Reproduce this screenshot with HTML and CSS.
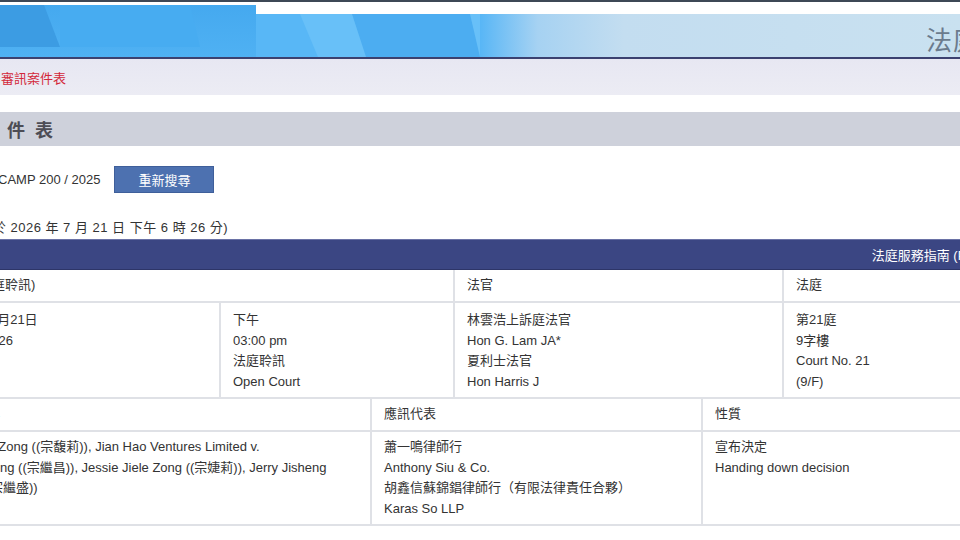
FILE: index.html
```html
<!DOCTYPE html>
<html lang="zh-Hant">
<head>
<meta charset="utf-8">
<title>審訊案件表</title>
<link rel="stylesheet" href="styles.css">
</head>
<body>
<div class="page">
  <div class="topline"></div>
  <header class="banner">
    <svg class="banner-art" width="960" height="55" viewBox="0 0 960 55" preserveAspectRatio="none" aria-hidden="true">
      <defs>
        <linearGradient id="fade" x1="0" y1="0" x2="1" y2="0">
          <stop offset="0" stop-color="#58b6f6"/>
          <stop offset="0.12" stop-color="#a6d2f2"/>
          <stop offset="0.3" stop-color="#c3ddf0"/>
          <stop offset="1" stop-color="#c9e1f0"/>
        </linearGradient>
        <linearGradient id="leftfade" x1="0" y1="0" x2="0" y2="1">
          <stop offset="0" stop-color="#45a9ef"/>
          <stop offset="1" stop-color="#4fb1f3"/>
        </linearGradient>
      </defs>
      <rect x="0" y="0" width="960" height="55" fill="#ffffff"/>
      <rect x="0" y="3" width="256" height="52" fill="url(#leftfade)"/>
      <polygon points="0,3 44,3 60,45 0,45" fill="#3c9ce3"/>
      <polygon points="60,3 190,3 200,45 60,45" fill="#47acf1"/>
      <rect x="256" y="12" width="224" height="43" fill="#68c0f8"/>
      <polygon points="256,12 300,12 318,55 256,55" fill="#58b7f6"/>
      <polygon points="352,12 470,12 480,55 366,55" fill="#4cadf1"/>
      <rect x="480" y="12" width="480" height="43" fill="url(#fade)"/>
    </svg>
    <span class="banner-title">法庭</span>
  </header>
  <div class="banner-rule"></div>
  <nav class="crumb"><span class="crumb-link">審訊案件表</span></nav>
  <h1 class="titlebar"><span class="title-text">審訊案件表</span></h1>
  <div class="search">
    <span class="case-no">CAMP 200 / 2025</span>
    <button class="btn" type="button">重新搜尋</button>
  </div>
  <p class="updated"><span class="updated-text">(資料更新於 2026 年 7 月 21 日 下午 6 時 26 分)</span></p>
  <div class="navbar"><span class="guide">法庭服務指南 (PDF)</span></div>

  <div class="tables">
    <table class="list list-a">
      <colgroup><col class="a1"><col class="a2"><col class="a3"><col class="a4"></colgroup>
      <tr class="head">
        <th colspan="2"><span class="shift">日期 (法庭聆訊)</span></th>
        <th>法官</th>
        <th>法庭</th>
      </tr>
      <tr class="body">
        <td>2026年7月21日<br>21/07/2026</td>
        <td>下午<br>03:00 pm<br>法庭聆訊<br>Open Court</td>
        <td>林雲浩上訴庭法官<br>Hon G. Lam JA*<br>夏利士法官<br>Hon Harris J</td>
        <td>第21庭<br>9字樓<br>Court No. 21<br>(9/F)</td>
      </tr>
    </table>
    <table class="list list-b">
      <colgroup><col class="b1"><col class="b2"><col class="b3"></colgroup>
      <tr class="head">
        <th>案件名稱</th>
        <th>應訊代表</th>
        <th>性質</th>
      </tr>
      <tr class="body">
        <td><span class="l1">Kelly Fuli Zong ((宗馥莉)), Jian Hao Ventures Limited v.</span><br><span class="l2">Jacky Zong ((宗繼昌)), Jessie Jiele Zong ((宗婕莉)), Jerry Jisheng</span><br><span class="l3">Zong ((宗繼盛))</span></td>
        <td>蕭一鳴律師行<br>Anthony Siu &amp; Co.<br>胡鑫信蘇錦錩律師行（有限法律責任合夥）<br>Karas So LLP</td>
        <td>宣布決定<br>Handing down decision</td>
      </tr>
    </table>
  </div>
</div>
</body>
</html>
```

FILE: styles.css
```css
html, body {
  margin: 0;
  padding: 0;
  background: #ffffff;
}
body {
  width: 960px;
  height: 540px;
  overflow: hidden;
  font-family: "Liberation Sans", "Noto Sans CJK TC", sans-serif;
  font-size: 13px;
  color: #333333;
}
.page {
  width: 960px;
  overflow: hidden;
}
.topline {
  height: 2px;
  background: #3e4856;
}
.banner {
  position: relative;
  height: 55px;
  display: flex;
  justify-content: flex-end;
  align-items: center;
  overflow: hidden;
}
.banner-art {
  position: absolute;
  left: 0;
  top: 0;
}
.banner-title {
  position: relative;
  font-size: 26px;
  color: #6b7b8d;
  margin-right: -20px;
  margin-top: 18px;
  letter-spacing: 1px;
}
.banner-rule {
  height: 2px;
  background: #3b4170;
}
.crumb {
  height: 36px;
  display: flex;
  align-items: center;
  background: linear-gradient(#e7e7f2, #ececf4);
}
.crumb-link {
  color: #d3283a;
  font-size: 13px;
  margin-left: 1px;
}
.titlebar {
  margin: 17px 0 0;
  height: 34px;
  display: flex;
  align-items: center;
  background: #ced1db;
  font-size: 18px;
  font-weight: bold;
  color: #4d4d55;
}
.title-text {
  margin-left: -77px;
  letter-spacing: 10px;
}
.search {
  margin-top: 20px;
  height: 27px;
  display: flex;
  align-items: center;
  gap: 14px;
}
.case-no {
  margin-left: -2px;
  color: #333;
}
.btn {
  width: 100px;
  height: 27px;
  background: #4d71b0;
  border: 1px solid #3f5f9a;
  color: #ffffff;
  font-family: inherit;
  font-size: 13px;
  padding: 0;
  margin-left: 0;
}
.updated {
  margin: 25px 0 0;
  line-height: 20px;
  white-space: nowrap;
}
.updated-text {
  margin-left: -66px;
  letter-spacing: 0.5px;
}
.navbar {
  margin-top: 1px;
  height: 31px;
  background: #3b4683;
  border-top: 1px solid #6a72a6;
  border-bottom: 1px solid #2d3568;
  box-sizing: border-box;
  display: flex;
  justify-content: flex-end;
  align-items: center;
  color: #ffffff;
  white-space: nowrap;
}
.guide {
  margin-right: -28px;
}
.tables {
  margin-left: -66px;
  width: 1150px;
}
.list {
  border-collapse: collapse;
  table-layout: fixed;
  font-size: 13px;
  color: #333;
}
.list th, .list td {
  border: 2px solid #dfe1e6;
  text-align: left;
  font-weight: normal;
  padding: 0 12px;
  line-height: 20.5px;
  white-space: nowrap;
  overflow: hidden;
}
.list .head th {
  height: 31px;
  vertical-align: middle;
}
.list .body td {
  vertical-align: top;
}
.shift { margin-left: -3px; }
.list-a { width: 1150px; }
.list-a .head th { border-top: 0; }
.list-a .body td { height: 80px; padding-top: 7px; padding-bottom: 5px; }
.a1 { width: 285px; }
.a2 { width: 234px; }
.a3 { width: 329px; }
.a4 { width: 302px; }
.list-b { width: 1150px; }
.list-b .head th { border-top: 0; }
.list-b .body td { height: 82px; padding-top: 5px; padding-bottom: 5px; }
.b1 { width: 436px; }
.b2 { width: 331px; }
.b3 { width: 383px; }
.l1 { margin-left: -6px; }
.l2 { margin-left: 0; }
.l3 { margin-left: 0; }
```
